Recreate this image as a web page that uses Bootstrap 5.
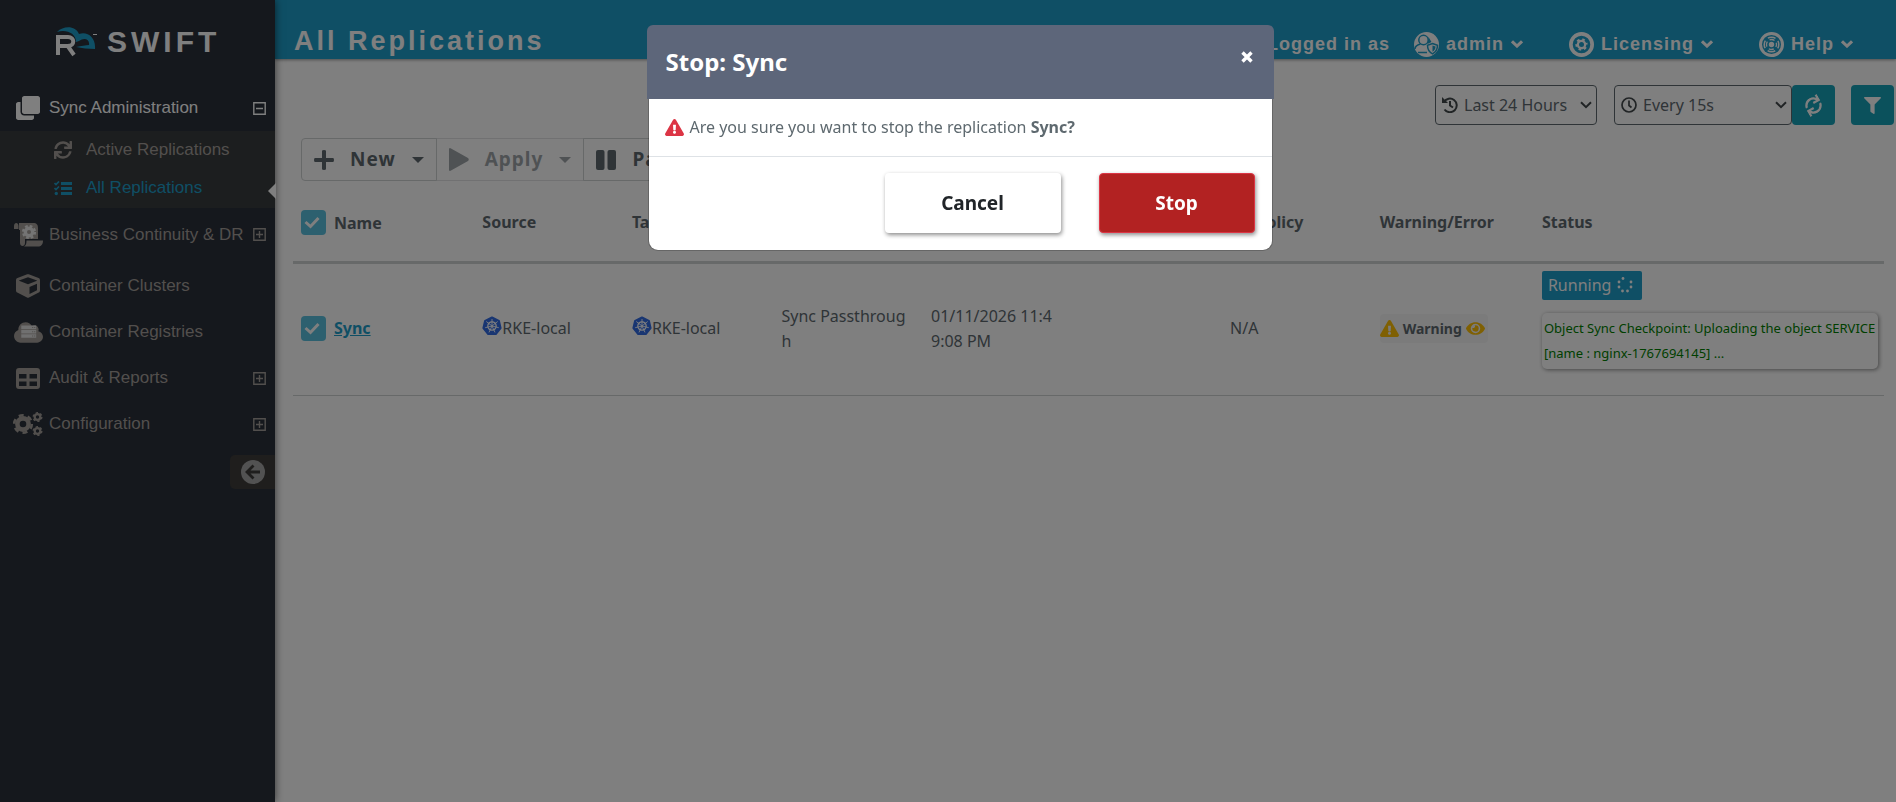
<!DOCTYPE html>
<html lang="en">
<head>
<meta charset="utf-8">
<meta name="viewport" content="width=device-width, initial-scale=1">
<title>All Replications</title>
<link href="https://cdn.jsdelivr.net/npm/bootstrap@5.3.0/dist/css/bootstrap.min.css" rel="stylesheet">
<style>
body{font-family:"Noto Sans",sans-serif;font-size:16px;color:#5e696f;background:#fff}
svg{display:block;flex:none}
.ico{fill:currentColor}
.line-ico{fill:none;stroke:currentColor}
/* sidebar */
.side{width:275px;background:#2a303a;color:#a49f9a;font-family:"Liberation Sans",Arial,sans-serif;font-size:17px;box-shadow:0 0 8px rgba(0,0,0,.6);z-index:2}
.brand{height:85px;padding-bottom:2px;color:#fff}
.brand-name{font-size:30px;font-weight:700;letter-spacing:4px;line-height:36px}
.side a{color:inherit;text-decoration:none}
.side-link{height:46px;padding:0 9px 0 10px}
.side-link .slot{width:39px;display:flex;justify-content:center;padding-right:3px}
.side-link.tall{height:55px;padding-bottom:2px}
.side-link.on{color:#fff}
.sub{background:#383c3e;padding-bottom:1px}
.sub-link{height:38px;padding-left:54px;gap:14px}
.side .sub-link.on{color:#1e9eca}
.notch{position:absolute;right:-1px;top:50%;border:8px solid transparent;border-right-color:#fff;border-left:0;margin-top:-5px}
.fold{width:45px;height:34px;background:#3e3c3a;border:0;border-radius:5px 0 0 5px;color:#a4a4a4}
/* top bar */
.top{height:59px;background:#1e9eca;color:#fff;font-family:"Liberation Sans",Arial,sans-serif;font-weight:700;padding:19px 43px 0 19px;box-shadow:0 1px 3px rgba(0,0,0,.4)}
.top h1{font-size:27px;letter-spacing:3px;line-height:44px;font-weight:700;margin:0}
.top-menu{font-size:18px;letter-spacing:1px;line-height:26px;padding-top:12px;gap:46px}
.top-menu button{background:none;border:0;padding:0;color:inherit;font:inherit;letter-spacing:inherit;gap:7px}
/* filters */
.filters{padding:26px 2px 0 0}
.pick{height:40px;border:1px solid #5e696f;border-radius:4px;padding:0 4px 0 6px;gap:6px}
.pick select{border:0;background:none;color:inherit;outline:0;height:38px;appearance:none;padding:0;margin:0}
.pick svg{color:#42484b}
.pick-range{width:162px;margin-right:17px}
.pick-every{width:178px}
.btn-teal{background:#17a2b8;color:#fff;width:43px;height:40px;border-radius:4px;border:0;padding:0}
.btn-teal:hover{background:#138496;color:#fff}
/* actions */
.acts{margin:13px 0 0 26px}
.acts .btn{height:43px;border:1px solid #cfd2d3;color:#5e696f;font-size:19px;font-weight:700;letter-spacing:1px;padding:0 12px;border-radius:4px;gap:16px}
.acts .btn:disabled{opacity:.6}
.caret{border:6px solid transparent;border-top-color:currentColor;border-bottom:0}
/* table */
.grid-wrap{padding:13px 12px 0 18px}
.grid{table-layout:fixed}
.grid td,.grid th{color:#5e696f;background:none;box-shadow:none}
.grid th{height:68px;border-bottom:3px solid #cfd2d3;vertical-align:top;padding:16px 8px 0;line-height:24px}
.grid td{height:133px;border-bottom:1px solid #cfd2d3;line-height:25px;word-break:break-all;vertical-align:middle;padding:0 8px 1px}
.grid td.state{padding:7px 6px 0 8px;vertical-align:top}
.tick{appearance:none;width:25px;height:25px;border-radius:4px;margin:0;flex:none;background:#5bc0de url("data:image/svg+xml,%3Csvg xmlns='http://www.w3.org/2000/svg' viewBox='0 0 25 25'%3E%3Cpath fill='none' stroke='%23fff' stroke-width='3' d='M4.500 12l5 4.500 8-8.500'/%3E%3C/svg%3E")}
.sync-link{color:#1e9eca;font-weight:700}
.warn{height:29px;background:#f6f6f6;border-radius:4px;font-size:14px;font-weight:700;gap:4px;border:0;color:#5e696f;padding:0 3px 0 0}
.warn svg{fill:#ffc107}
.run{height:29px;background:#1e9eca;color:#fff;border-radius:2px;padding:0 9px 0 6px;gap:6px}
.note{font-size:13px;line-height:25px;color:#008000;border-radius:5px;padding:3px 2px;margin-top:13px;box-shadow:1px 1px 4px rgba(0,0,0,.45);white-space:nowrap}
/* dialog */
.ask-wrap{padding-left:24px}
.ask{max-width:625px;margin-top:25px;margin-bottom:0}
.ask .modal-content{border-radius:10px;border:1px solid rgba(0,0,0,.2)}
.ask .modal-header{background:#5d667a;color:#fff;height:74px;margin:-1px -2px 0;border:0;border-radius:6px 6px 0 0;padding:0 21px 0 19px}
.ask .modal-title{font-size:24px;line-height:36px}
.shut{background:none;border:0;color:#fff;padding:0;margin-bottom:10px}
.ask .modal-body{padding:16px;line-height:25px;gap:6px}
.ask .modal-footer{padding:0 17px 1px;gap:38px;height:94px}
.ask .modal-footer>*{margin:0}
.ask .btn{height:60px;font-size:19px;font-weight:700;border-radius:4px;box-shadow:1px 2px 4px rgba(0,0,0,.45)}
.ask .no{width:176px;background:#fff;color:#212529;border:0}
.ask .yes{width:156px;background:#b22222;color:#fff;border:1px solid #dc3545}
</style>
</head>
<body>
<svg width="0" height="0" class="position-absolute" aria-hidden="true">
<symbol id="sync" viewBox="0 0 512 512"><path d="M440.65 12.57l4 82.77A247.16 247.16 0 0 0 255.83 8C134.73 8 33.91 94.92 12.29 209.82A12 12 0 0 0 24.09 224h49.05a12 12 0 0 0 11.67-9.26 175.91 175.91 0 0 1 317-56.94l-101.46-4.86a12 12 0 0 0-12.57 12v47.41a12 12 0 0 0 12 12H500a12 12 0 0 0 12-12V12a12 12 0 0 0-12-12h-47.37a12 12 0 0 0-11.98 12.57zM255.83 432a175.61 175.61 0 0 1-146-77.8l101.8 4.87a12 12 0 0 0 12.57-12v-47.4a12 12 0 0 0-12-12H12a12 12 0 0 0-12 12V500a12 12 0 0 0 12 12h47.35a12 12 0 0 0 12-12.6l-4.15-82.57A247.17 247.17 0 0 0 255.83 504c121.11 0 221.93-86.92 243.55-201.82a12 12 0 0 0-11.8-14.18h-49.05a12 12 0 0 0-11.67 9.26A175.86 175.86 0 0 1 255.83 432z"/></symbol>
<symbol id="tri" viewBox="0 0 576 512"><path d="M569.517 440.013C587.975 472.007 564.806 512 527.94 512H48.054c-36.937 0-59.999-40.055-41.577-71.987L246.423 23.985c18.467-32.009 64.72-31.951 83.154 0l239.94 416.028zM288 354c-25.405 0-46 20.595-46 46s20.595 46 46 46 46-20.595 46-46-20.595-46-46-46zm-43.673-165.346l7.418 136c.347 6.364 5.609 11.346 11.982 11.346h48.546c6.373 0 11.635-4.982 11.982-11.346l7.418-136c.375-6.874-5.098-12.654-11.982-12.654h-63.383c-6.884 0-12.356 5.78-11.981 12.654z"/></symbol>
<symbol id="more" viewBox="0 0 13 13"><path fill="none" stroke="currentColor" stroke-width="1.4" d="M.8.8h11.4v11.4H.8zM3 6.5h7M6.500 3v7"/></symbol>
<symbol id="less" viewBox="0 0 13 13"><path fill="none" stroke="currentColor" stroke-width="1.4" d="M.8.8h11.4v11.4H.8zM3 6.500h7"/></symbol>
<symbol id="down" viewBox="0 0 12 8"><path fill="none" stroke="currentColor" stroke-width="3" d="M1 1.300l5 4.800 5-4.800"/></symbol>
<symbol id="thin-down" viewBox="0 0 12 8"><path fill="none" stroke="currentColor" stroke-width="2" d="M1 1.300l5 4.800 5-4.800"/></symbol>
<symbol id="wheel" viewBox="0 0 20 20"><path fill="#326ce5" stroke="#326ce5" stroke-width="2" stroke-linejoin="round" d="M10 1.500l6.900 3.300 1.700 7.300-4.800 5.900H6.200l-4.800-5.900 1.700-7.300z"/><g fill="none" stroke="#fff"><circle cx="10" cy="10" r="4.200" stroke-width="1.200"/><path stroke-width=".9" d="M10 3v7M10 10l5.700-4.500M10 10l6.800 1.700M10 10l3 6.400M10 10l-3 6.400M10 10l-6.800 1.700M10 10L4.300 5.500"/></g></symbol>
</svg>

<div class="d-flex min-vh-100">
<nav class="side position-relative flex-shrink-0" aria-label="Main">
  <div class="brand d-flex align-items-center ps-5">
    <svg width="47" height="30" viewBox="0 0 47 30" class="ms-2"><path fill="#1e9eca" d="M1 5C8-2 20-1 23 7c8-3 17 3 16 15-7 0-13-1-19-2 5-1 10-2 13-2 1-6-5-8-10-4l-3 1C20 6 10 2 1 5z"/><path fill="none" stroke="#fff" stroke-width="4" d="M2 28V10H12c7 0 7 9 0 9H4M11 18l7 10"/><path fill="#fff" d="M37 7h4v1h-4z"/></svg>
    <span class="brand-name ms-1">SWIFT</span>
  </div>
  <a href="#" class="side-link on d-flex align-items-center">
    <span class="slot"><svg class="ico" width="24" height="24" viewBox="0 0 512 512"><path d="M464 0c26.500 0 48 21.500 48 48v288c0 26.500-21.500 48-48 48H176c-26.500 0-48-21.500-48-48V48c0-26.500 21.500-48 48-48zM176 416c-44 0-80-36-80-80V128H48c-26.500 0-48 21.500-48 48v288c0 26.500 21.500 48 48 48h288c26.500 0 48-21.500 48-48v-48z"/></svg></span>
    <span class="flex-grow-1">Sync Administration</span><svg width="13" height="13"><use href="#less"/></svg>
  </a>
  <div class="sub">
    <a href="#" class="sub-link d-flex align-items-center"><svg class="ico" width="18" height="18"><use href="#sync"/></svg>Active Replications</a>
    <a href="#" class="sub-link on d-flex align-items-center position-relative"><svg width="18" height="15" viewBox="0 0 18 15" fill="none" stroke="currentColor"><path stroke-width="2.800" d="M7 2.500h11M7 7.500h11M7 12.500h11"/><path stroke-width="1.700" d="M.5 2l1.500 1.500L5 .5M.5 7L2 8.500l3-3"/><circle cx="2.300" cy="12.500" r="1.700" fill="currentColor" stroke="none"/></svg>All Replications<span class="notch"></span></a>
  </div>
  <a href="#" class="side-link tall d-flex align-items-center">
    <span class="slot"><svg class="ico" width="29" height="24" viewBox="0 0 29 24"><path d="M5 0h14c4 0 5 2 5 5v11H11v4c0 4-5 4-5 0V7H5zM0 6V3c0-4 4.500-4 4.500 0v3zM12.500 17.500H29c0 4-2 6-5 6H10c2-1 2.500-3 2.500-6z"/><circle cx="15" cy="9" r="3.700" fill="none" stroke="#e8e8e8" stroke-width="3.400"/><circle cx="15" cy="9" r="6" fill="none" stroke="#e8e8e8" stroke-width="2.200" stroke-dasharray="2.700 2.012"/></svg></span>
    <span class="flex-grow-1">Business Continuity &amp; DR</span><svg width="13" height="13"><use href="#more"/></svg>
  </a>
  <a href="#" class="side-link d-flex align-items-center">
    <span class="slot"><svg class="ico" width="24" height="24" viewBox="0 0 512 512"><path d="M239.100 6.300l-208 78c-18.700 7-31.100 25-31.100 45v225.100c0 18.200 10.300 34.800 26.500 42.900l208 104c13.500 6.800 29.400 6.800 42.900 0l208-104c16.300-8.100 26.500-24.800 26.500-42.900V129.300c0-20-12.400-37.900-31.100-44.900l-208-78C262 2.200 250 2.200 239.100 6.300zM256 68.400l192 72v1.100l-192 78-192-78v-1.100l192-72zm32 356V275.500l160-65v133.900l-160 80z"/></svg></span>
    <span>Container Clusters</span>
  </a>
  <a href="#" class="side-link d-flex align-items-center">
    <span class="slot"><svg class="ico" width="29" height="21" viewBox="0 0 640 464"><path transform="translate(0 -24)" d="M0 336c0 79.500 64.500 144 144 144H512c70.700 0 128-57.300 128-128c0-61.900-44-113.600-102.400-125.400c4.100-10.700 6.400-22.400 6.400-34.600c0-53-43-96-96-96c-19.700 0-38.100 6-53.300 16.200C367 64.200 315.300 32 256 32C167.600 32 96 103.600 96 192c0 2.700.1 5.400.2 8.100C40.200 219.800 0 273.200 0 336z"/><path fill="#e0e0e0" d="M160 80h330v80H160zM160 175h330v80H160zM160 270h330v80H160z"/><path d="M400 108h25v25h-25zM445 108h25v25h-25zM400 203h25v25h-25zM445 203h25v25h-25zM400 298h25v25h-25zM445 298h25v25h-25z"/></svg></span>
    <span>Container Registries</span>
  </a>
  <a href="#" class="side-link d-flex align-items-center">
    <span class="slot"><svg class="ico" width="24" height="21" viewBox="0 0 24 21"><path fill-rule="evenodd" d="M3 0h18a3 3 0 0 1 3 3v15a3 3 0 0 1-3 3H3a3 3 0 0 1-3-3V3a3 3 0 0 1 3-3zm0 6v4.500h7.500V6zm10.500 0v4.500H21V6zM3 13.500V18h7.500v-4.500zm10.500 0V18H21v-4.500z"/></svg></span>
    <span class="flex-grow-1">Audit &amp; Reports</span><svg width="13" height="13"><use href="#more"/></svg>
  </a>
  <a href="#" class="side-link d-flex align-items-center">
    <span class="slot"><svg class="line-ico" width="30" height="24" viewBox="0 0 30 24"><circle cx="10" cy="12" r="5.600" stroke-width="4.600"/><circle cx="10" cy="12" r="8.800" stroke-width="2.600" stroke-dasharray="5 4.215"/><circle cx="24.500" cy="5" r="2.800" stroke-width="2.200"/><circle cx="24.500" cy="5" r="4.300" stroke-width="1.400" stroke-dasharray="2.250 2.253"/><circle cx="24.500" cy="19" r="2.800" stroke-width="2.200"/><circle cx="24.500" cy="19" r="4.300" stroke-width="1.400" stroke-dasharray="2.250 2.253"/></svg></span>
    <span class="flex-grow-1">Configuration</span><svg width="13" height="13"><use href="#more"/></svg>
  </a>
  <div class="d-flex justify-content-end pt-2">
    <button class="fold d-flex align-items-center justify-content-center" aria-label="Collapse menu"><svg width="24" height="24" viewBox="0 0 24 24"><circle cx="12" cy="12" r="12" fill="currentColor"/><path d="M19 12H6.500M12.500 5.500L6 12l6.500 6.500" fill="none" stroke="#3e3c3a" stroke-width="2.800"/></svg></button>
  </div>
</nav>

<main class="flex-grow-1">
  <header class="top d-flex justify-content-between align-items-start">
    <h1>All Replications</h1>
    <div class="top-menu d-flex align-items-center">
      <div class="d-flex align-items-center"><span class="me-4">Logged in as</span>
      <button class="d-flex align-items-center"><svg width="25" height="25" viewBox="0 0 25 25"><circle cx="12.500" cy="12.500" r="12.500" fill="#fff"/><g fill="none" stroke="#1e9eca" stroke-width="1.500"><circle cx="9.500" cy="8" r="4.700"/><path d="M6.500 12C3 13 1 14 1 17M4 20.500h9M18.500 11.500l5 1.800c0 4-1 6.500-5 8.500-4-2-5-4.500-5-8.500z"/></g><path fill="#1e9eca" d="M18.500 13.500v6.300c2-1.200 3-2.800 3-5.200zM14.500 5l3 5-4 2z"/></svg>admin <svg width="12" height="8"><use href="#down"/></svg></button></div>
      <button class="d-flex align-items-center"><svg width="25" height="25" viewBox="0 0 25 25"><circle cx="12.500" cy="12.500" r="12.500" fill="#fff"/><g fill="none" stroke="#1e9eca"><circle cx="12.500" cy="12.500" r="7.500" stroke-width="2.600"/><circle cx="12.500" cy="12.500" r="6" stroke-width="2.400" stroke-dasharray="3.300 2.983" stroke-dashoffset="0"/></g><circle cx="12.500" cy="12.500" r="2.500" fill="#1e9eca"/></svg>Licensing <svg width="12" height="8"><use href="#down"/></svg></button>
      <button class="d-flex align-items-center"><svg width="25" height="25" viewBox="0 0 25 25"><circle cx="12.500" cy="12.500" r="12.500" fill="#fff"/><circle cx="12.500" cy="12.500" r="9.500" fill="#1e9eca"/><g fill="none" stroke="#fff"><circle cx="12.500" cy="12.500" r="7.300" stroke-width="1.500" stroke-dasharray="8 3.467" stroke-dashoffset="4"/><circle cx="12.500" cy="12.500" r="5" stroke-width="1.300" stroke-dasharray="5.200 2.654" stroke-dashoffset="2.600"/></g><circle cx="12.500" cy="12.500" r="2.700" fill="#fff"/></svg>Help <svg width="12" height="8"><use href="#down"/></svg></button>
    </div>
  </header>

  <div class="filters d-flex justify-content-end">
    <label class="pick pick-range d-flex align-items-center"><svg width="16" height="16" viewBox="0 0 16 16" class="line-ico" stroke-width="2"><path d="M2 5a6.800 6.800 0 1 1 .5 7.500M8 4v4.500l3 2"/><path d="M0 0v6h6z" fill="currentColor" stroke="none"/></svg><select class="flex-grow-1" aria-label="Time range"><option>Last 24 Hours</option></select><svg width="12" height="8"><use href="#thin-down"/></svg></label>
    <label class="pick pick-every d-flex align-items-center"><svg width="16" height="16" viewBox="0 0 16 16" class="line-ico" stroke-width="1.700"><circle cx="8" cy="8" r="7"/><path d="M8 3.500V8.500l2.500 2"/></svg><select class="flex-grow-1" aria-label="Refresh interval"><option>Every 15s</option></select><svg width="12" height="8"><use href="#thin-down"/></svg></label>
    <button class="btn btn-teal d-flex align-items-center justify-content-center me-3" aria-label="Refresh"><svg class="ico" width="17" height="17" viewBox="0 0 512 512" overflow="visible"><use href="#sync" transform="rotate(-30 256 256)"/></svg></button>
    <button class="btn btn-teal d-flex align-items-center justify-content-center" aria-label="Filter"><svg class="ico" width="17" height="17" viewBox="0 0 512 512"><path d="M488 0H24C2.700 0-8 25.900 7 41l185 185v206c0 8 4 15 10 20l80 56c16 11 38 0 38-20V226L505 41C520 26 509 0 488 0z"/></svg></button>
  </div>

  <div class="acts btn-group">
    <button class="btn d-flex align-items-center"><svg class="ico" width="20" height="20" viewBox="0 0 20 20"><path d="M8 1q0-1 2-1t2 1v7h7q1 0 1 2t-1 2h-7v7q0 1-2 1t-2-1v-7H1q-1 0-1-2t1-2h7z"/></svg>New<i class="caret"></i></button>
    <button class="btn d-flex align-items-center" disabled><svg class="ico" width="20" height="23" viewBox="0 0 20 23"><path d="M0 1.500Q0-.8 2 .400L19 10q1.500 1.500 0 3L2 22.600Q0 23.800 0 21.500z"/></svg>Apply<i class="caret"></i></button>
    <button class="btn d-flex align-items-center"><svg class="ico" width="20" height="20" viewBox="0 0 20 20"><rect width="8.500" height="20" rx="2"/><rect x="11.500" width="8.500" height="20" rx="2"/></svg>Pause</button>
  </div>

  <div class="grid-wrap">
  <table class="table grid mb-0">
    <colgroup><col style="width:11.4%"><col style="width:9.400%"><col style="width:9.400%"><col style="width:9.400%"><col style="width:9.400%"><col style="width:9.400%"><col style="width:9.400%"><col style="width:10.200%"><col></colgroup>
    <thead><tr><th scope="col"><label class="d-flex align-items-center gap-2"><input type="checkbox" class="tick" checked>Name</label></th><th scope="col">Source</th><th scope="col">Target</th><th scope="col"></th><th scope="col"></th><th scope="col"></th><th scope="col">DR Policy</th><th scope="col">Warning/Error</th><th scope="col">Status</th></tr></thead>
    <tbody><tr>
      <td><div class="d-flex align-items-center gap-2"><input type="checkbox" class="tick" checked aria-label="Select Sync"><a href="#" class="sync-link">Sync</a></div></td>
      <td><span class="d-flex"><svg width="20" height="20"><use href="#wheel"/></svg>RKE-local</span></td>
      <td><span class="d-flex"><svg width="20" height="20"><use href="#wheel"/></svg>RKE-local</span></td>
      <td>Sync Passthrough</td><td>01/11/2026 11:49:08 PM</td><td></td><td>N/A</td>
      <td><button class="warn d-inline-flex align-items-center"><svg width="19" height="17"><use href="#tri"/></svg>Warning<svg width="19" height="17" viewBox="0 0 576 512"><path d="M572.520 241.400C518.290 135.590 410.930 64 288 64S57.680 135.640 3.480 241.410a32.350 32.350 0 0 0 0 29.190C57.710 376.410 165.070 448 288 448s230.320-71.640 284.520-177.410a32.350 32.350 0 0 0 0-29.190zM288 400a144 144 0 1 1 144-144 143.930 143.930 0 0 1-144 144zm0-240a95.310 95.310 0 0 0-25.310 3.790 47.850 47.850 0 0 1-66.900 66.900A95.780 95.780 0 1 0 288 160z"/></svg></button></td>
      <td class="state"><span class="run d-inline-flex align-items-center">Running <svg width="16" height="16" viewBox="0 0 16 16" fill="currentColor"><circle cx="6" cy="1.500" r="1.400"/><circle cx="2" cy="5" r="1.400"/><circle cx="2" cy="10" r="1.400"/><circle cx="5.500" cy="14" r="1.400"/><circle cx="10.500" cy="14" r="1.400"/><circle cx="14" cy="10" r="1.400"/><circle cx="14" cy="5" r="1.400"/></svg></span><div class="note">Object Sync Checkpoint: Uploading the object SERVICE<br>[name : nginx-1767694145] ...</div></td>
    </tr></tbody>
  </table>
  </div>
</main>
</div>

<div class="modal-backdrop show"></div>
<div class="modal d-block ask-wrap" role="dialog" aria-modal="true" aria-labelledby="ask-title">
  <div class="modal-dialog ask"><div class="modal-content">
    <div class="modal-header"><h5 class="modal-title fw-bold" id="ask-title">Stop: Sync</h5><button class="shut" aria-label="Close"><svg width="12" height="12" viewBox="0 0 12 12"><path stroke="#fff" stroke-width="3.400" d="M1.500 1.500l9 9M10.500 1.500l-9 9"/></svg></button></div>
    <div class="modal-body d-flex align-items-center"><svg width="19" height="17" fill="#dc3545"><use href="#tri"/></svg><span>Are you sure you want to stop the replication <b>Sync?</b></span></div>
    <div class="modal-footer"><button class="btn no">Cancel</button><button class="btn yes">Stop</button></div>
  </div></div>
</div>
<script src="https://cdn.jsdelivr.net/npm/bootstrap@5.3.0/dist/js/bootstrap.bundle.min.js"></script>
</body>
</html>
